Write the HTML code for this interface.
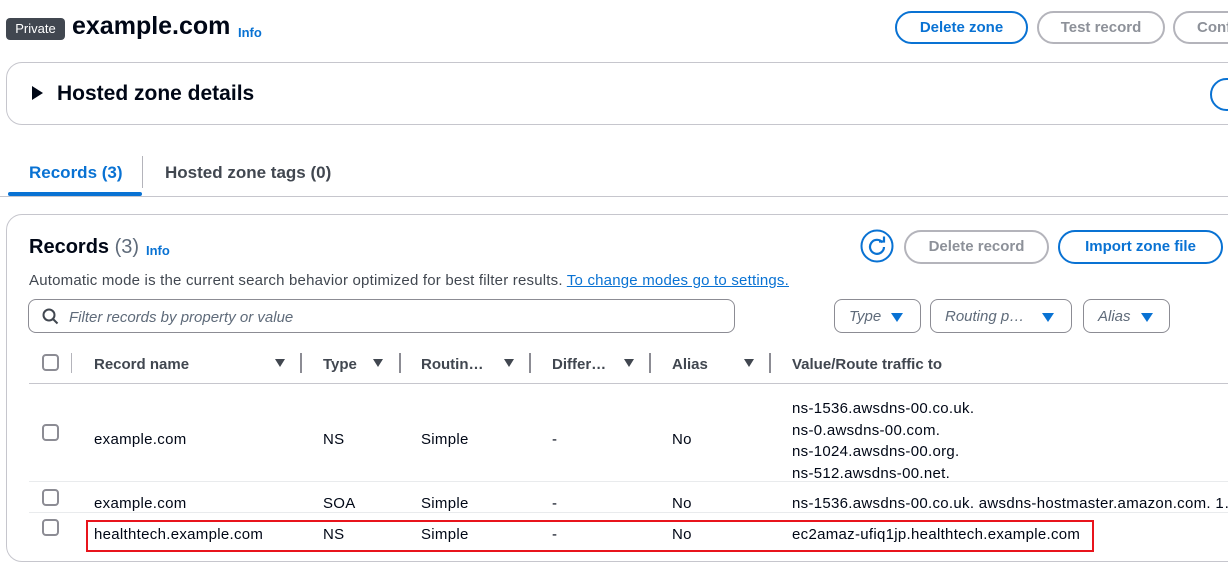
<!DOCTYPE html>
<html><head><meta charset="utf-8"><style>
*{box-sizing:border-box;margin:0;padding:0}
body{width:1228px;height:570px;overflow:hidden;background:#fff;font-family:"Liberation Sans",sans-serif;color:#000716;position:relative}
.a{position:absolute;white-space:nowrap}
.btn{position:absolute;border:2px solid #0972d3;border-radius:17px;color:#0972d3;font-weight:bold;font-size:15px;text-align:center;background:#fff}
.btn.g{border-color:#b4b4bb;color:#8d9199}
.card{position:absolute;border:1px solid #c6c6cd;border-radius:16px;background:#fff}
.th{position:absolute;top:356px;font-size:15px;font-weight:bold;color:#414750}
.sep{position:absolute;top:353px;width:2px;height:20px;background:#8c8c94}
.sort{position:absolute;top:359px;width:0;height:0;border-left:5px solid transparent;border-right:5px solid transparent;border-top:8px solid #414750}
.cb{position:absolute;width:17px;height:17px;border:2px solid #8c8c94;border-radius:4px;left:42px}
.td{position:absolute;font-size:15px;color:#000716;white-space:nowrap;letter-spacing:0.3px}
.hl{position:absolute;left:86px;right:0;height:1px;background:#e9ebed}
.flt{position:absolute;top:299px;height:34px;border:1px solid #8c8c94;border-radius:8px;font-style:italic;color:#5f6b7a;font-size:15px;padding:8px 0 0 14px}
.dd{position:absolute;top:13px;width:0;height:0;border-left:6px solid transparent;border-right:6px solid transparent;border-top:9px solid #0972d3}
</style></head><body>
<div class="a" style="left:6px;top:18px;width:59px;height:22px;background:#414750;border-radius:4px;color:#fff;font-size:13px;text-align:center;line-height:22px">Private</div>
<div class="a" style="left:72px;top:12px;font-size:25px;font-weight:bold">example.com</div>
<div class="a" style="left:238px;top:25px;font-size:13px;font-weight:bold;color:#0972d3">Info</div>
<div class="btn" style="left:895px;top:11px;width:133px;height:33px;line-height:29px">Delete zone</div>
<div class="btn g" style="left:1037px;top:11px;width:128px;height:33px;line-height:29px">Test record</div>
<div class="btn g" style="left:1173px;top:11px;width:100px;height:33px;line-height:29px;text-align:left;padding-left:22px">Conf</div>

<div class="card" style="left:6px;top:62px;width:1260px;height:63px"></div>
<div class="a" style="left:32px;top:86px;width:0;height:0;border-top:7px solid transparent;border-bottom:7px solid transparent;border-left:11px solid #000716"></div>
<div class="a" style="left:57px;top:82px;font-size:21px;font-weight:bold">Hosted zone details</div>
<div class="a" style="left:1210px;top:78px;width:34px;height:33px;border:2px solid #0972d3;border-radius:17px"></div>

<div class="a" style="left:29px;top:163px;font-size:17px;font-weight:bold;color:#0972d3">Records (3)</div>
<div class="a" style="left:8px;top:192px;width:134px;height:4px;background:#0972d3;border-radius:2px"></div>
<div class="a" style="left:142px;top:156px;width:1px;height:32px;background:#b4b4bb"></div>
<div class="a" style="left:165px;top:163px;font-size:17px;font-weight:bold;color:#414750">Hosted zone tags (0)</div>
<div class="a" style="left:0;top:196px;width:1228px;height:1px;background:#c6c6cd"></div>

<div class="card" style="left:6px;top:214px;width:1260px;height:348px"></div>
<div class="a" style="left:29px;top:236px;font-size:20px;font-weight:bold">Records <span style="font-weight:normal;color:#5f6b7a">(3)</span></div>
<div class="a" style="left:146px;top:243px;font-size:13px;font-weight:bold;color:#0972d3">Info</div>
<svg class="a" style="left:860px;top:229px" width="34" height="34" viewBox="0 0 34 34"><circle cx="17" cy="17" r="15.5" fill="none" stroke="#0972d3" stroke-width="2"/><path d="M22.5 13.5A7 7 0 1 0 24 18" fill="none" stroke="#0972d3" stroke-width="2.2"/><path d="M19 12.5h5v-5" fill="none" stroke="#0972d3" stroke-width="2.2"/></svg>
<div class="btn g" style="left:904px;top:230px;width:145px;height:34px;line-height:30px">Delete record</div>
<div class="btn" style="left:1058px;top:230px;width:165px;height:34px;line-height:30px">Import zone file</div>
<div class="a" style="left:29px;top:272px;font-size:15px;letter-spacing:0.2px;color:#414750">Automatic mode is the current search behavior optimized for best filter results. <span style="color:#0972d3;text-decoration:underline">To change modes go to settings.</span></div>

<div class="a" style="left:28px;top:299px;width:707px;height:34px;border:1px solid #8c8c94;border-radius:8px"></div>
<svg class="a" style="left:42px;top:308px" width="17" height="17" viewBox="0 0 17 17"><circle cx="7" cy="7" r="5.5" fill="none" stroke="#414750" stroke-width="2"/><path d="M11 11l4.5 4.5" stroke="#414750" stroke-width="2"/></svg>
<div class="a" style="left:69px;top:309px;font-size:15px;font-style:italic;color:#5f6b7a">Filter records by property or value</div>
<div class="flt" style="left:834px;width:87px">Type<div class="dd" style="left:56px"></div></div>
<div class="flt" style="left:930px;width:142px">Routing p…<div class="dd" style="left:111px"></div></div>
<div class="flt" style="left:1083px;width:87px">Alias<div class="dd" style="left:57px"></div></div>

<div class="cb" style="top:354px"></div>
<div class="a" style="left:71px;top:353px;width:1px;height:20px;background:#b4b4bb"></div>
<div class="th" style="left:94px">Record name</div><div class="sort" style="left:275px"></div><div class="sep" style="left:300px"></div>
<div class="th" style="left:323px">Type</div><div class="sort" style="left:373px"></div><div class="sep" style="left:399px"></div>
<div class="th" style="left:421px">Routin…</div><div class="sort" style="left:504px"></div><div class="sep" style="left:529px"></div>
<div class="th" style="left:552px">Differ…</div><div class="sort" style="left:624px"></div><div class="sep" style="left:649px"></div>
<div class="th" style="left:672px">Alias</div><div class="sort" style="left:744px"></div><div class="sep" style="left:769px"></div>
<div class="th" style="left:792px">Value/Route traffic to</div>
<div class="a" style="left:29px;top:383px;width:1199px;height:1px;background:#c6c6cd"></div>

<div class="cb" style="top:424px"></div>
<div class="td" style="left:94px;top:431px">example.com</div>
<div class="td" style="left:323px;top:431px">NS</div>
<div class="td" style="left:421px;top:431px">Simple</div>
<div class="td" style="left:552px;top:431px">-</div>
<div class="td" style="left:672px;top:431px">No</div>
<div class="td" style="left:792px;top:398px;line-height:21.7px">ns-1536.awsdns-00.co.uk.<br>ns-0.awsdns-00.com.<br>ns-1024.awsdns-00.org.<br>ns-512.awsdns-00.net.</div>
<div class="hl" style="left:29px;top:481px;width:1199px"></div>
<div class="cb" style="top:489px"></div>
<div class="td" style="left:94px;top:495px">example.com</div>
<div class="td" style="left:323px;top:495px">SOA</div>
<div class="td" style="left:421px;top:495px">Simple</div>
<div class="td" style="left:552px;top:495px">-</div>
<div class="td" style="left:672px;top:495px">No</div>
<div class="td" style="left:792px;top:495px">ns-1536.awsdns-00.co.uk. awsdns-hostmaster.amazon.com. 1…</div>
<div class="hl" style="left:29px;top:512px;width:1199px"></div>
<div class="cb" style="top:519px"></div>
<div class="a" style="left:86px;top:520px;width:1008px;height:32px;border:2px solid #e8141c"></div>
<div class="td" style="left:94px;top:526px">healthtech.example.com</div>
<div class="td" style="left:323px;top:526px">NS</div>
<div class="td" style="left:421px;top:526px">Simple</div>
<div class="td" style="left:552px;top:526px">-</div>
<div class="td" style="left:672px;top:526px">No</div>
<div class="td" style="left:792px;top:526px">ec2amaz-ufiq1jp.healthtech.example.com</div>
</body></html>
